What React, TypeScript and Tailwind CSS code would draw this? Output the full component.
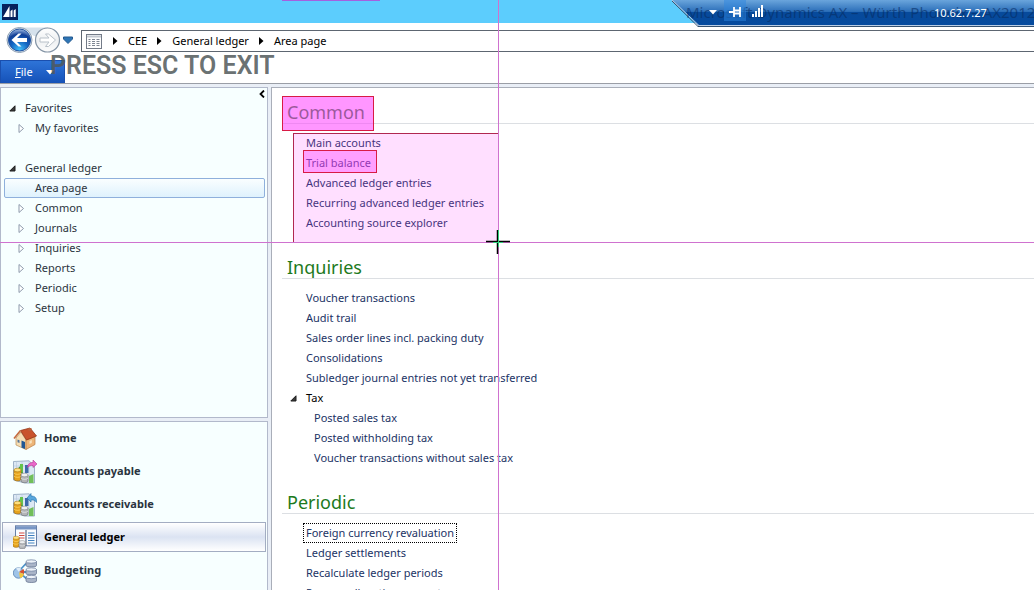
import type { ReactNode } from "react";

type TreeItem = { label: string; selected?: boolean };
type NavItem = { label: string; icon: ReactNode; active?: boolean };

const crumbs = ["CEE", "General ledger", "Area page"];

const ledgerTree: TreeItem[] = [
  { label: "Area page", selected: true },
  { label: "Common" },
  { label: "Journals" },
  { label: "Inquiries" },
  { label: "Reports" },
  { label: "Periodic" },
  { label: "Setup" },
];

function Collapsed() {
  return (
    <svg width="7" height="9" viewBox="0 0 7 9" fill="#fff" stroke="#8d99ab">
      <path d="M1 .5 L5.500 4.500 L1 8.500 Z" />
    </svg>
  );
}

function Expanded() {
  return (
    <svg width="7" height="7" viewBox="0 0 7 7">
      <path d="M6 .8 V6 H.8 Z" fill="#3c3c3c" stroke="#1c1c1c" />
    </svg>
  );
}

function AppLogo() {
  return (
    <svg width="16" height="16" viewBox="0 0 16 16">
      <rect width="16" height="16" fill="#06215c" />
      <path d="M1 13 L7.500 2 V13 Z M8.500 13 V7 L10.500 5.500 V13 Z M11.700 13 V6.500 L13.700 5 V13 Z" fill="#fff" />
    </svg>
  );
}

function NavButtons() {
  return (
    <svg width="68" height="28" viewBox="0 0 68 28" aria-hidden="true">
      <defs>
        <radialGradient id="back" cx=".5" cy=".95" r=".95">
          <stop offset="0" stopColor="#3fc0fb" />
          <stop offset=".45" stopColor="#1263c0" />
          <stop offset=".75" stopColor="#123f96" />
          <stop offset="1" stopColor="#a6c1e8" />
        </radialGradient>
        <linearGradient id="fwd" x2="0" y2="1">
          <stop offset="0" stopColor="#fff" />
          <stop offset=".5" stopColor="#eef0f2" />
          <stop offset="1" stopColor="#fdfdfd" />
        </linearGradient>
      </defs>
      <path d="M14 1.500 H42 V10 H28 Z" fill="#d5e1ec" />
      <circle cx="13.500" cy="14" r="12.500" fill="#dbe6f1" stroke="#8d9eb1" />
      <circle cx="13.500" cy="14" r="11" fill="url(#back)" stroke="#2455a2" />
      <path d="M5.500 14 L12.500 7.500 H15.500 L11 12 H21 V16 H11 L15.500 20.500 H12.500 Z" fill="#fff" />
      <circle cx="41.500" cy="14" r="12" fill="url(#fwd)" stroke="#8595a6" strokeWidth="1.200" />
      <path d="M34 12 H43 L39.500 8 H42.500 L49.500 14 L42.500 20.500 H39.500 L43 16 H34 Z" fill="#fff" stroke="#b9c1c9" />
      <path d="M57.500 11 H66.500 V13 L62 17.500 L57.500 13 Z" fill="#2e75b5" stroke="#245a90" />
    </svg>
  );
}

function PageIcon() {
  return (
    <svg width="16" height="15" viewBox="0 0 16 15" className="mr-px shrink-0">
      <rect x=".5" y=".5" width="15" height="14" fill="#fdfdfd" stroke="#737b88" />
      <path d="M1 2.500 H15" stroke="#c3c8d0" strokeWidth="2" />
      <path d="M2.500 5.500H4.500M2.500 7.500H4.500M2.500 9.500H4.500M2.500 11.500H4.500M6 5.500H9M6 7.500H9M6 9.500H9M6 11.500H9M10.500 5.500H13.500M10.500 7.500H13.500M10.500 9.500H13.500M10.500 11.500H13.500" stroke="#7d8592" />
    </svg>
  );
}

function HomeIcon() {
  return (
    <svg width="24" height="24" viewBox="0 0 24 24">
      <path d="M3 11 L8 5 L13 13 V22.500 L3 18 Z" fill="#f6dfb5" stroke="#b98b55" strokeWidth=".7" />
      <path d="M13 13 L22 9.500 V17.500 L13 22.500 Z" fill="#edb679" stroke="#b77d45" strokeWidth=".7" />
      <path d="M7.500 3.500 L17 1 L23.500 9 L13.500 13 Z" fill="#c9532c" stroke="#943516" strokeWidth=".8" />
      <path d="M7.500 3.500 L1 11.500" stroke="#c46a3e" strokeWidth="1.600" />
      <path d="M15.500 1 H18.500 V4 H15.500 Z" fill="#b8603c" />
      <path d="M8.500 13.500 L12 15 V22 L8.500 20.500 Z" fill="#1f5794" />
      <path d="M4.500 12.500 L6.500 13.300 V16 L4.500 15.200 Z" fill="#587799" />
      <path d="M16.500 14 L18.800 13 V16 L16.500 17 Z" fill="#f8e3bf" />
    </svg>
  );
}

function Coins({ x, y }: { x: number; y: number }) {
  return (
    <g transform={`translate(${x} ${y})`}>
      <path d="M0 2 V11 C0 13.500 7 13.500 7 11 V2 Z" fill="#e5a21d" stroke="#9d6a10" strokeWidth=".7" />
      <ellipse cx="3.500" cy="2" rx="3.500" ry="1.800" fill="#ffe07a" stroke="#b07c14" strokeWidth=".6" />
      <path d="M0 5 C1 6.800 6 6.800 7 5 M0 8 C1 9.800 6 9.800 7 8" fill="none" stroke="#ffd562" strokeWidth=".8" />
      <path d="M7 7 V13 C7 15.200 14 15.200 14 13 V7 Z" fill="#b3b5b8" stroke="#707377" strokeWidth=".7" />
      <ellipse cx="10.500" cy="7" rx="3.500" ry="1.800" fill="#eff0f1" stroke="#84878b" strokeWidth=".6" />
      <path d="M7 10 C8 11.800 13 11.800 14 10" fill="none" stroke="#e5e7e8" strokeWidth=".8" />
    </g>
  );
}

function AccountsIcon({ incoming }: { incoming?: boolean }) {
  return (
    <svg width="24" height="24" viewBox="0 0 24 24">
      <path d="M.5 1.500 L16 .8 L21.500 6 V23 H12 L.5 20 Z" fill="#dce8f4" stroke="#8ba1bb" strokeWidth=".8" />
      <path d="M3.500 1.500 V20 M9 1.500 V20 M16 1 V22 M1 6 H20" stroke="#b7c8dc" strokeWidth=".6" />
      <path d="M6 7 H9.500 V13 H6 Z" fill="#4db348" stroke="#27802b" strokeWidth=".5" />
      <path d="M7 4 H10 V12 H7 Z" fill="#65c24b" />
      <path d="M12 5 H15.500 V13 H12 Z" fill="#3d68a9" />
      <path d="M16 16 L20.500 14 V23 H16 Z" fill="#71bf5a" />
      <Coins x={1} y={8} />
      {incoming ? (
        <path d="M14 5 L18 .5 V3 C22 3 24 5 23.500 9.500 C22 7 20.500 6.800 18 7 V9 Z" fill="#58a7dd" stroke="#246fa8" strokeWidth=".6" />
      ) : (
        <path d="M14.500 7.500 C15 3.500 17 2.500 20 2.500 V0 L24 4 L20 7.500 V5.500 C17.500 5.200 16 5.800 14.500 7.500 Z" fill="#ea69c9" stroke="#b23a94" strokeWidth=".6" />
      )}
    </svg>
  );
}

function LedgerIcon() {
  return (
    <svg width="24" height="24" viewBox="0 0 24 24">
      <rect x="2.500" y=".8" width="21" height="20" fill="#fafcfe" stroke="#667fa8" />
      <path d="M3 1.200 H23 V4.500 H3 Z" fill="#7896c5" />
      <path d="M13 5 V21" stroke="#5a6b85" strokeWidth="1.200" />
      <path d="M6 8H11.500M6 10.500H11.500M6 13H11.500" stroke="#d14a40" strokeWidth="1.200" />
      <path d="M15 8H21.500M15 10.500H21.500M15 13H21.500M15 15.500H21.500M15 18H21.500" stroke="#3f80c0" strokeWidth="1.200" />
      <g transform="translate(0 11) scale(.88)">
        <Coins x={0} y={0} />
      </g>
    </svg>
  );
}

function Cylinder({ y }: { y: number }) {
  return (
    <g transform={`translate(13 ${y})`}>
      <path d="M0 2 V6 C0 8 10.500 8 10.500 6 V2 Z" fill="#a9b5c8" stroke="#5b6c89" strokeWidth=".7" />
      <ellipse cx="5.250" cy="2" rx="5.250" ry="1.700" fill="#edf2f8" stroke="#66789a" strokeWidth=".7" />
    </g>
  );
}

function BudgetIcon() {
  return (
    <svg width="24" height="24" viewBox="0 0 24 24">
      <path d="M7 11 L13 4.500 M9 13 H14 M8 15 L14 20" stroke="#4d94cb" strokeWidth="1.800" />
      <circle cx="5.500" cy="14" r="5.200" fill="#9ec4e8" stroke="#5b83b1" strokeWidth=".8" />
      <path d="M6 13 L10.500 10 A5.200 5.200 0 0 1 11 15 Z" fill="#d9502f" />
      <path d="M6 13.500 L11 15 A5.200 5.200 0 0 1 7 19 Z" fill="#f4c53d" />
      <path d="M6 13 L3 9.500 A5.200 5.200 0 0 1 8 9.300 Z" fill="#dfedf9" />
      <Cylinder y={0.5} />
      <Cylinder y={8.5} />
      <Cylinder y={16} />
    </svg>
  );
}

const navItems: NavItem[] = [
  { label: "Home", icon: <HomeIcon /> },
  { label: "Accounts payable", icon: <AccountsIcon /> },
  { label: "Accounts receivable", icon: <AccountsIcon incoming /> },
  { label: "General ledger", icon: <LedgerIcon />, active: true },
  { label: "Budgeting", icon: <BudgetIcon /> },
];

function TreeRoot({ label }: { label: string }) {
  return (
    <button className="flex h-5 w-full items-center pl-2 text-left">
      <span className="w-4"><Expanded /></span>
      {label}
    </button>
  );
}

function TreeRow({ label, selected }: TreeItem) {
  return (
    <button
      className={
        selected
          ? "ml-[3px] mr-[2px] flex h-5 items-center rounded-xs border border-[#8fb0dc] bg-linear-to-b from-[#fafeff] to-[#dff2fd] pl-[30px] text-left"
          : "flex h-5 items-center pl-[17px] text-left"
      }
    >
      {!selected && <span className="w-[17px]"><Collapsed /></span>}
      {label}
    </button>
  );
}

function Section({ title, children }: { title: string; children: ReactNode }) {
  return (
    <section className="mb-4">
      <h2 className="mb-[9px] flex h-[30px] items-end border-b border-[#dcdfe3] pl-[5px] text-[18px] leading-[22px] text-[#1d7a1d]">{title}</h2>
      <div className="pl-6">{children}</div>
    </section>
  );
}

function LinkRow({ children, focused }: { children: string; focused?: boolean }) {
  return (
    <li className="flex h-5 items-center">
      <a
        href="#"
        className={focused ? "-ml-[3px] border border-dotted border-black px-0.5 leading-[18px]" : "leading-5"}
      >
        {children}
      </a>
    </li>
  );
}

function ConnectionBar() {
  return (
    <div className="absolute top-0 right-0 left-[672px] h-[27px]">
      <svg className="absolute inset-0 h-full w-full" viewBox="0 0 362 27" preserveAspectRatio="none">
        <defs>
          <linearGradient id="bar" x2="0" y2="1">
            <stop offset="0" stopColor="#6aa5dc" />
            <stop offset=".44" stopColor="#2c6fb9" />
            <stop offset=".48" stopColor="#074a9b" />
            <stop offset="1" stopColor="#054a9e" />
          </linearGradient>
        </defs>
        <path d="M0 0 H362 V26 H27 Z" fill="url(#bar)" />
        <path d="M0 0 L27 25.500 H362" fill="none" stroke="#b9cde6" strokeWidth="1" />
        <path d="M-1 0 L26 26.500 H362" fill="none" stroke="#34506f" strokeWidth="1" />
      </svg>
      <div className="relative flex h-6 items-center overflow-hidden pl-[14px] text-[15px] whitespace-pre text-[#062c63]/60">
        Microsoft Dynamics AX – Würth Phoenix – AX2012
      </div>
      <div className="absolute inset-y-0 left-[37px] flex items-start">
        <button aria-label="Menu" className="mt-[10px]">
          <svg width="8" height="5" viewBox="0 0 8 5"><path d="M0 0 H8 L4 4.500 Z" fill="#fff" /></svg>
        </button>
        <button aria-label="Pin" className="ml-[7px] flex h-[21px] w-[22px] items-center justify-center bg-[#2d86e0]/50 pt-[3px]">
          <svg width="12" height="10" viewBox="0 0 12 10">
            <path d="M0 5 H5 M5 0 V10 M11 0 V10 M5 3.500 H11 M5 6.500 H11" stroke="#fff" strokeWidth="1.800" fill="none" />
          </svg>
        </button>
        <svg className="mt-[5px] ml-[6px]" width="11" height="12" viewBox="0 0 11 12" fill="#fff">
          <path d="M0 9H2V12H0Z M3 6H5V12H3Z M6 3H8V12H6Z M9 0H11V12H9Z" />
        </svg>
      </div>
      <span className="absolute top-[3px] left-[262px] leading-5 text-white">10.62.7.27</span>
    </div>
  );
}

export default function App() {
  return (
    <div className="relative flex h-screen flex-col overflow-hidden bg-[#e9eef6] font-['Noto_Sans',sans-serif] text-[11px] text-[#2b3440]">
      <header className="shrink-0 bg-white">
        <div className="flex h-[23px] items-center bg-[#5ccdfd] pl-[2px]">
          <AppLogo />
        </div>
        <div className="flex h-[37px] items-start pt-[3px] pl-[6px]">
          <button aria-label="Back and forward" className="w-[75px] shrink-0"><NavButtons /></button>
          <nav className="mt-1 flex h-[22px] flex-1 items-center border border-r-0 border-[#5d6671] pl-1 text-black">
            <PageIcon />
            {crumbs.map((crumb) => (
              <span key={crumb} className="flex items-center">
                <svg className="mx-[10px]" width="5" height="8" viewBox="0 0 5 8"><path d="M0 0 L4.500 4 L0 8 Z" /></svg>
                <a href="#">{crumb}</a>
              </span>
            ))}
          </nav>
        </div>
        <div className="flex h-6 items-end border-b border-[#9a9ea6]">
          <button className="flex h-full w-[65px] items-center border border-b-0 border-[#1a4fae] bg-linear-to-b from-[#2e74d8] to-[#1551b8] pl-[14px] text-white">
            <span><span className="underline">F</span>ile</span>
            <svg className="ml-[13px]" width="8" height="5" viewBox="0 0 8 5"><path d="M0 0 H8 L4 4.500 Z" fill="#fff" /></svg>
          </button>
        </div>
      </header>

      <div className="mt-[3px] flex min-h-0 flex-1 gap-[3px]">
        <aside className="flex w-[268px] shrink-0 flex-col">
          <div className="relative flex min-h-0 flex-1 flex-col border border-[#b2b9cb] bg-[#f7ffff] pt-[10px]">
            <button aria-label="Collapse" className="absolute top-[2px] right-[2px]">
              <svg width="6" height="8" viewBox="0 0 6 8" fill="none" stroke="#000" strokeWidth="1.800"><path d="M5 .5 L1.500 4 L5 7.500" /></svg>
            </button>
            <TreeRoot label="Favorites" />
            <TreeRow label="My favorites" />
            <div className="h-5" />
            <TreeRoot label="General ledger" />
            {ledgerTree.map((item) => <TreeRow key={item.label} {...item} />)}
          </div>
          <nav className="mt-[3px] shrink-0 border-x border-t border-[#b2b9cb] bg-[#f7ffff] pb-[3px] font-bold">
            {navItems.map((item) => (
              <a
                key={item.label}
                href="#"
                className={
                  item.active
                    ? "mx-px my-px mb-[2px] flex h-[30px] items-center border border-[#a3adc2] bg-linear-to-b from-white via-[#dbe3f2] to-white pl-[10px] text-black"
                    : "flex h-[33px] items-center pl-3"
                }
              >
                <span className="w-[31px]">{item.icon}</span>
                {item.label}
              </a>
            ))}
          </nav>
        </aside>

        <main className="min-w-0 flex-1 overflow-hidden border-t border-l border-[#a9aeb9] bg-white pt-[6px] pl-[10px] text-[#1b3365]">
          <Section title="Common">
            <ul>
              <LinkRow>Main accounts</LinkRow>
              <LinkRow>Trial balance</LinkRow>
              <LinkRow>Advanced ledger entries</LinkRow>
              <LinkRow>Recurring advanced ledger entries</LinkRow>
              <LinkRow>Accounting source explorer</LinkRow>
            </ul>
          </Section>
          <Section title="Inquiries">
            <ul>
              <LinkRow>Voucher transactions</LinkRow>
              <LinkRow>Audit trail</LinkRow>
              <LinkRow>Sales order lines incl. packing duty</LinkRow>
              <LinkRow>Consolidations</LinkRow>
              <LinkRow>Subledger journal entries not yet transferred</LinkRow>
            </ul>
            <button className="-ml-4 flex h-5 items-center text-black">
              <span className="w-4"><Expanded /></span>
              Tax
            </button>
            <ul className="pl-2">
              <LinkRow>Posted sales tax</LinkRow>
              <LinkRow>Posted withholding tax</LinkRow>
              <LinkRow>Voucher transactions without sales tax</LinkRow>
            </ul>
          </Section>
          <Section title="Periodic">
            <ul>
              <LinkRow focused>Foreign currency revaluation</LinkRow>
              <LinkRow>Ledger settlements</LinkRow>
              <LinkRow>Recalculate ledger periods</LinkRow>
              <LinkRow>Process allocation requests</LinkRow>
            </ul>
          </Section>
        </main>
      </div>

      <ConnectionBar />

      <div className="pointer-events-none absolute inset-0">
        <div className="absolute top-0 left-[282px] h-px w-[98px] bg-[#a55fe0]" />
        <div className="absolute top-[96px] left-[282px] h-[35px] w-[92px] border border-[#d81b45] bg-[#ff40ff]/55" />
        <div className="absolute top-[133px] left-[293px] h-[110px] w-[206px] border border-[#b02850] bg-[#ff40ff]/17" />
        <div className="absolute top-[150px] left-[303px] h-[23px] w-[74px] border border-[#d81b45] bg-[#ff40ff]/40" />
        <div className="absolute inset-y-0 left-[498px] w-px bg-[#cf72cf]" />
        <div className="absolute inset-x-0 top-[242px] h-px bg-[#cf72cf]" />
        <svg className="absolute top-[230px] left-[486px]" width="24" height="24" viewBox="0 0 24 24">
          <path d="M0 11.500 H24 M11.500 0 V24" stroke="#000" strokeWidth="1.500" />
          <path d="M7 12.500 H17 M12.500 0 V17" stroke="#2fce7a" />
        </svg>
        <p className="absolute top-[51px] left-[50px] font-['Roboto',sans-serif] text-[25px] leading-[30px] font-semibold whitespace-nowrap text-[#50585a]/85">
          PRESS ESC TO EXIT
        </p>
      </div>
    </div>
  );
}
